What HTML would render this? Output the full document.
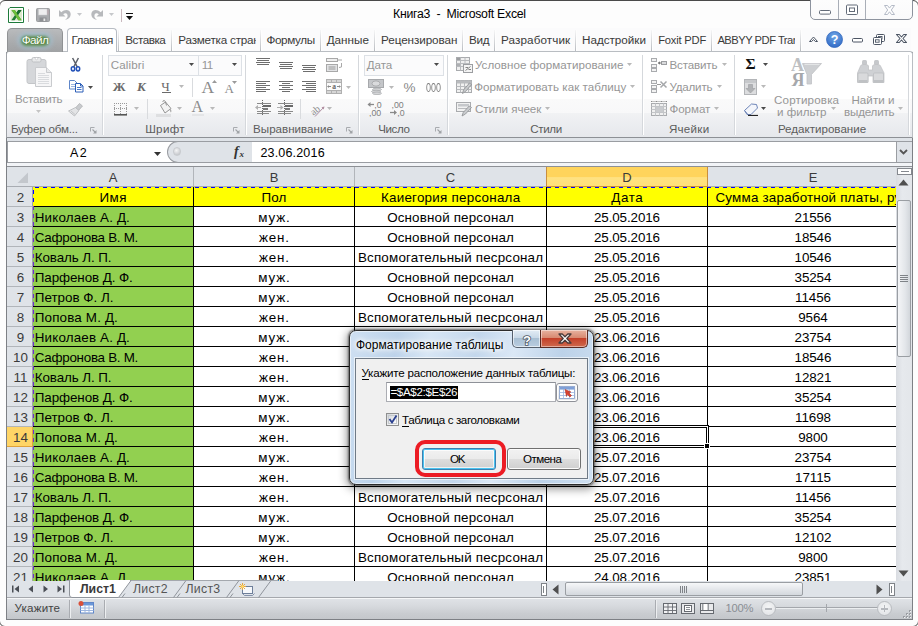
<!DOCTYPE html>
<html><head><meta charset="utf-8">
<style>
*{box-sizing:border-box;margin:0;padding:0}
html,body{width:918px;height:626px;overflow:hidden;background:#fff}
body{font-family:"Liberation Sans",sans-serif;font-size:12px;color:#000;position:relative}
.abs{position:absolute}
#win{position:absolute;left:-1px;top:0;width:920px;height:627px;border:1px solid #4a4a4a;border-radius:6px;background:#fdfdfd;overflow:hidden}
#frame{position:absolute;left:0;top:0;width:918px;height:626px;overflow:hidden}
#client{position:absolute;left:6px;top:52px;width:907px;height:568px;background:#e9ebee;border-left:1px solid #7d8085;border-right:1px solid #7d8085;border-bottom:1px solid #7d8085}
/* title */
#title{position:absolute;left:0;top:6px;width:918px;text-align:center;font-size:12.5px;color:#000;letter-spacing:0px}
/* tabs */
#tabrow{position:absolute;left:7px;top:28px;width:904px;height:24px;background:#fbfbfc}
.tab{position:absolute;top:28px;height:24px;line-height:25px;font-size:12px;color:#3b3b3b;white-space:nowrap;overflow:hidden}
.tsep{position:absolute;top:30px;width:1px;height:21px;background:linear-gradient(#f6f6f7,#b9bcc1)}
.tsep2{position:absolute;top:30px;width:1px;height:21px;background:linear-gradient(#fdfdfd,#ffffff)}
#file{position:absolute;left:7px;top:28px;width:56px;height:24px;background:linear-gradient(#b9bbbd,#a9abad 60%,#a0a2a4);border:1px solid #909294;border-bottom:none;border-radius:5px 5px 0 0}
#home{position:absolute;left:67px;top:28px;width:50px;height:24px;background:#fff;border:1px solid #b7bcc3;border-bottom:none;border-radius:4px 4px 0 0;z-index:3}
/* ribbon */
#ribbon{position:absolute;left:6px;top:51px;width:907px;height:87px;border:1px solid #b9bdc2;border-bottom:1px solid #8d9095;border-left:1px solid #9da0a5;border-radius:3px 3px 0 0;background:linear-gradient(#ffffff 0%,#ffffff 55.3%,#fafafa 55.3%,#f8f8f9 71.8%,#f1f2f4 71.8%,#e6e8ec 100%)}
.gsep{position:absolute;top:55px;width:2px;height:80px;background:linear-gradient(90deg,#d5d8dc 50%,#ffffff 50%)}
.glabel{position:absolute;top:122px;font-size:11.5px;color:#5a5a5a;white-space:nowrap;text-align:center}
.rt{position:absolute;font-size:12px;color:#8c8c8c;white-space:nowrap}
/* formula bar */
#fbar{position:absolute;left:7px;top:138px;width:905px;height:29px;background:#dfe3e8}
#fb2{position:absolute;left:7px;top:163px;width:905px;height:3px;background:#f2f4f7}
#fb3{position:absolute;left:7px;top:166px;width:905px;height:1px;background:#8d9095}
#namebox{position:absolute;left:7px;top:141px;width:175px;height:22px;background:#fff;border:1px solid #9a9da2;border-right:none}
#fxarea{position:absolute;left:252px;top:141px;width:644px;height:22px;background:#fff;border-top:1px solid #9a9da2;border-bottom:1px solid #9a9da2}
.cal{font-family:"Liberation Sans",sans-serif}
/* grid */
#gridbg{position:absolute;left:7px;top:167px;width:889px;height:414px;background:#fff}
#colhdr{position:absolute;left:7px;top:167px;width:889px;height:20px;background:#dfe3e8;border-bottom:1px solid #a8acb2}
.ch{position:absolute;top:167px;height:19px;line-height:21px;text-align:center;font-size:13px;color:#3a3a3a;border-right:1px solid #b1b5ba}
.rh{position:absolute;left:7px;width:26px;height:20px;background:#dfe3e8;border-bottom:1px solid #b1b5ba;border-right:1px solid #9da2a8;text-align:center;line-height:22px;font-size:13.4px;color:#3a3a3a;padding-left:2px}
.rh.sel{background:#ffd566;border-bottom:1px solid #dfa23c;border-right:1px solid #dfa23c;color:#3a3a3a}
.c{position:absolute;height:20px;line-height:21px;font-size:13.4px;text-align:center;white-space:nowrap;overflow:hidden;border-right:1px solid #000;border-bottom:1px solid #000;color:#000;letter-spacing:0.2px}
.c.n{letter-spacing:-0.1px}
/* bottom */
#sheetbar{position:absolute;left:7px;top:581px;width:905px;height:16px;background:#dfe3e8}
#status{position:absolute;left:7px;top:597px;width:905px;height:22px;background:linear-gradient(#e0e3e7 0%,#d6d9dd 40%,#c9ccd0 75%,#c4c7cb 100%);border-top:1px solid #a5a8ad;box-shadow:inset 0 1px 0 #f6f7f8}
#vscroll{position:absolute;left:896px;top:167px;width:16px;height:414px;background:linear-gradient(90deg,#d9dce1,#e6e9ed 40%,#e3e6ea);}
</style></head><body>
<div id="frame">
<div id="win"></div>
<div id="client"></div>


<div id="tabrow"></div>
<div id="ribbon"></div>
<div id="file"></div>
<div id="home"></div>
<div style="position:absolute;left:393.00px;top:6px;font-size:12.3px;line-height:16px;letter-spacing:-0.271px;color:#000;white-space:nowrap;white-space:pre;">Книга3  -  Microsoft Excel</div>
<svg style="position:absolute;left:8px;top:7px;" width="17" height="16" viewBox="0 0 17 16"><path d="M2 0.500H15.500V15.500H0.500V2z" fill="#fff" stroke="#1d7a3a"/>
<rect x="2.500" y="2.500" width="11.500" height="11" fill="#dce8cc"/>
<path d="M3.500 3h3.300l1.700 2.800L10.300 3h3.200L10 8l3.600 5.200h-3.300L8.500 10.200 6.700 13.200H3.400L7 8z" fill="#1f7a34"/>
<path d="M3.500 3h3.300L10 8l3.600 5.200h-3.300L7 8z" fill="#6fbf3a"/><path d="M8.500 5.800L10.300 3h3.200L10 8z" fill="#176b2c"/></svg>
<div style="position:absolute;left:28px;top:9px;width:1px;height:13px;background:#c9b8be"></div>
<svg style="position:absolute;left:36px;top:8px;" width="14" height="14" viewBox="0 0 14 14"><rect x="0.500" y="0.500" width="13" height="13" rx="1" fill="#a9abae" stroke="#9a9c9f"/>
<rect x="2.500" y="1" width="8.500" height="6" fill="#eeeeef" stroke="#c9cbcd" stroke-width=".5"/><rect x="3.500" y="9.500" width="7" height="4" fill="#8e9093"/><rect x="7.500" y="10.500" width="1.800" height="2.500" fill="#e9e9e9"/><path d="M12 1.500v5" stroke="#c5a8ae" stroke-width=".8"/></svg>
<svg style="position:absolute;left:58px;top:8px;" width="14" height="13" viewBox="0 0 14 13"><path d="M1 2v6.500h6.500L5.200 6.200C7 4.800 9 5.200 9.500 7c.5 2-.5 3.500-2.500 5 4.200-.8 6.300-3.800 5.500-7C11.700 1.500 7 .5 3.300 4.300z" fill="#b7b9bc"/></svg>
<svg style="position:absolute;left:77px;top:13px" width="5" height="3" viewBox="0 0 5 3"><path d="M0 0H5L2.5 3Z" fill="#c6c8cb"/></svg>
<svg style="position:absolute;left:90px;top:8px;" width="14" height="13" viewBox="0 0 14 13"><g transform="translate(14,0) scale(-1,1)"><path d="M1 2v6.500h6.500L5.200 6.200C7 4.800 9 5.200 9.500 7c.5 2-.5 3.500-2.500 5 4.200-.8 6.300-3.800 5.500-7C11.700 1.500 7 .5 3.300 4.300z" fill="#b7b9bc"/></g></svg>
<svg style="position:absolute;left:109px;top:13px" width="5" height="3" viewBox="0 0 5 3"><path d="M0 0H5L2.5 3Z" fill="#c6c8cb"/></svg>
<div style="position:absolute;left:121px;top:9px;width:1px;height:13px;background:#c9b8be"></div>
<div style="position:absolute;left:126px;top:13px;width:7px;height:1px;background:#111"></div>
<svg style="position:absolute;left:126px;top:16px" width="7" height="4" viewBox="0 0 7 4"><path d="M0 0H7L3.5 4Z" fill="#111"/></svg>
<div style="position:absolute;left:810px;top:-1px;width:103px;height:21px;border:1px solid #8d939e;border-radius:0 0 5px 5px;background:linear-gradient(#fdfdfd,#fafafb)"></div>
<div style="position:absolute;left:838px;top:0px;width:1px;height:19px;background:#a9aeb7"></div>
<div style="position:absolute;left:865px;top:0px;width:1px;height:19px;background:#a9aeb7"></div>
<svg style="position:absolute;left:818px;top:9px;" width="14" height="7" viewBox="0 0 14 7"><rect x="1.500" y="1.500" width="11" height="3.600" rx="1" fill="#fff" stroke="#636b78" stroke-width="1"/></svg>
<svg style="position:absolute;left:845px;top:4px;" width="14" height="12" viewBox="0 0 14 12"><rect x="1.500" y="1" width="11" height="9.500" rx="1" fill="#fff" stroke="#636b78"/><rect x="4.500" y="4" width="5" height="3.500" fill="#fff" stroke="#636b78"/></svg>
<svg style="position:absolute;left:883px;top:4px;" width="13" height="12" viewBox="0 0 13 12"><path d="M1.500 1.500h3l2 2.600 2-2.600h3L8.300 6l3.200 4.500h-3l-2-2.700-2 2.700h-3L4.700 6z" fill="#fff" stroke="#b4bac6" stroke-width="1"/></svg>
<div style="position:absolute;left:125.20px;top:32px;font-size:11.7px;line-height:15px;letter-spacing:-0.464px;color:#3a3a3a;white-space:nowrap;">Вставка</div>
<div style="position:absolute;left:178.30px;top:32px;font-size:11.7px;line-height:15px;letter-spacing:-0.223px;color:#3a3a3a;white-space:nowrap;width:77.3px;overflow:hidden;">Разметка стран</div>
<div style="position:absolute;left:266.40px;top:32px;font-size:11.7px;line-height:15px;letter-spacing:-0.336px;color:#3a3a3a;white-space:nowrap;">Формулы</div>
<div style="position:absolute;left:326.70px;top:32px;font-size:11.7px;line-height:15px;letter-spacing:0.006px;color:#3a3a3a;white-space:nowrap;">Данные</div>
<div style="position:absolute;left:381.10px;top:32px;font-size:11.7px;line-height:15px;letter-spacing:-0.082px;color:#3a3a3a;white-space:nowrap;">Рецензирован</div>
<div style="position:absolute;left:468.90px;top:32px;font-size:11.7px;line-height:15px;letter-spacing:-0.233px;color:#3a3a3a;white-space:nowrap;">Вид</div>
<div style="position:absolute;left:501.10px;top:32px;font-size:11.7px;line-height:15px;letter-spacing:0.087px;color:#3a3a3a;white-space:nowrap;">Разработчик</div>
<div style="position:absolute;left:582.00px;top:32px;font-size:11.7px;line-height:15px;letter-spacing:-0.022px;color:#3a3a3a;white-space:nowrap;">Надстройки</div>
<div style="position:absolute;left:658.20px;top:33px;font-size:11.2px;line-height:14px;letter-spacing:-0.210px;color:#3a3a3a;white-space:nowrap;">Foxit PDF</div>
<div style="position:absolute;left:717.40px;top:33px;font-size:11.2px;line-height:14px;letter-spacing:-0.499px;color:#3a3a3a;white-space:nowrap;width:77.6px;overflow:hidden;">ABBYY PDF Tran</div>
<div class="tsep" style="left:118px"></div><div class="tsep2" style="left:119px"></div>
<div class="tsep" style="left:171px"></div><div class="tsep2" style="left:172px"></div>
<div class="tsep" style="left:260px"></div><div class="tsep2" style="left:261px"></div>
<div class="tsep" style="left:320px"></div><div class="tsep2" style="left:321px"></div>
<div class="tsep" style="left:374px"></div><div class="tsep2" style="left:375px"></div>
<div class="tsep" style="left:462px"></div><div class="tsep2" style="left:463px"></div>
<div class="tsep" style="left:494px"></div><div class="tsep2" style="left:495px"></div>
<div class="tsep" style="left:575px"></div><div class="tsep2" style="left:576px"></div>
<div class="tsep" style="left:651px"></div><div class="tsep2" style="left:652px"></div>
<div class="tsep" style="left:711px"></div><div class="tsep2" style="left:712px"></div>
<div class="tsep" style="left:800px"></div><div class="tsep2" style="left:801px"></div>
<svg style="position:absolute;left:808px;top:35px;" width="11" height="8" viewBox="0 0 11 8"><path d="M1.500 6.500L5.500 2l4 4.500H7.300L5.500 4.500 3.700 6.500z" fill="#fff" stroke="#4c5564" stroke-width="1" stroke-linejoin="round"/></svg>
<svg style="position:absolute;left:826px;top:31px;" width="17" height="17" viewBox="0 0 17 17"><defs><radialGradient id="hg" cx=".5" cy=".3" r=".8"><stop offset="0" stop-color="#6fa6e6"/><stop offset="1" stop-color="#2a63c2"/></radialGradient></defs>
<circle cx="8.500" cy="8.500" r="8" fill="url(#hg)" stroke="#3268be" stroke-width=".8"/>
<text x="8.500" y="13" font-family="Liberation Sans" font-weight="bold" font-size="12.500" fill="#fff" text-anchor="middle">?</text></svg>
<svg style="position:absolute;left:851px;top:37px;" width="13" height="7" viewBox="0 0 13 7"><rect x="1.500" y="1.500" width="10" height="3.500" rx="1" fill="#fff" stroke="#4c5564"/></svg>
<svg style="position:absolute;left:872px;top:33px;" width="14" height="13" viewBox="0 0 14 13"><rect x="4.500" y="1.500" width="8" height="7" rx="1" fill="#fff" stroke="#4c5564"/><rect x="6.500" y="3.500" width="3.500" height="2.500" fill="#fff" stroke="#4c5564" stroke-width=".9"/><rect x="1.500" y="4.500" width="8" height="7" rx="1" fill="#fff" stroke="#4c5564"/><rect x="3.500" y="6.800" width="3.600" height="2.400" fill="#fff" stroke="#4c5564" stroke-width=".9"/></svg>
<svg style="position:absolute;left:895px;top:33px;" width="13" height="11" viewBox="0 0 13 11"><path d="M1.500 1.500h2.800l2.200 2.500 2.200-2.500h2.800L8 5.500l3.500 4H8.700L6.500 7 4.300 9.500H1.500L5 5.500z" fill="#fff" stroke="#4c5564" stroke-width="1.100" stroke-linejoin="round"/></svg><div style="position:absolute;left:71.40px;top:32px;font-size:11.7px;line-height:15px;letter-spacing:-0.439px;color:#3a3a3a;white-space:nowrap;z-index:4;">Главная</div><div style="position:absolute;left:18px;top:33px;width:34px;height:15px;border-radius:8px;background:#a3bfd0;filter:blur(2.5px);z-index:4"></div><div style="position:absolute;left:21px;top:35.5px;width:28px;height:10px;border-radius:5px;background:#5f8c4c;filter:blur(1.8px);z-index:4"></div><div style="position:absolute;left:21.70px;top:32px;font-size:11.8px;line-height:16px;letter-spacing:-0.637px;color:#fff;white-space:nowrap;z-index:5;text-shadow:0 0 1px #3f7030;">Файл</div>
<div class="gsep" style="left:102px"></div>
<div class="gsep" style="left:245px"></div>
<div class="gsep" style="left:358px"></div>
<div class="gsep" style="left:447px"></div>
<div class="gsep" style="left:642px"></div>
<div class="gsep" style="left:734px"></div>
<div class="gsep" style="left:908px"></div>
<svg style="position:absolute;left:26px;top:56px;" width="27" height="32" viewBox="0 0 27 32"><rect x="1" y="3.500" width="19" height="24" rx="2" fill="#d5d7da" stroke="#c3c5c8"/>
<rect x="6" y="1.500" width="9" height="4.500" rx="1.500" fill="#e8e9ea" stroke="#bfc1c4"/><circle cx="10.500" cy="2.600" r="1.200" fill="#fff" stroke="#bfc1c4" stroke-width=".6"/>
<path d="M9.500 11.500h11l5 5v14h-16z" fill="#f6f6f7" stroke="#c9cbce"/><path d="M20.500 11.500v5h5" fill="#e9eaeb" stroke="#c9cbce"/>
<g stroke="#d9dbde"><path d="M12 19.500h11M12 21.500h11M12 23.500h11M12 25.500h11M12 27.500h11M12 17.500h7"/></g></svg>
<div style="position:absolute;left:14.90px;top:92px;font-size:11.6px;line-height:14px;letter-spacing:-0.210px;color:#969696;white-space:nowrap;">Вставить</div>
<svg style="position:absolute;left:36px;top:110px" width="5" height="3" viewBox="0 0 5 3"><path d="M0 0H5L2.5 3Z" fill="#c4c4c4"/></svg>
<svg style="position:absolute;left:70px;top:57px;" width="11" height="15" viewBox="0 0 11 15"><path d="M2.600 1L7.300 10M8.400 1L3.700 10" stroke="#5b5f67" stroke-width="1.500" fill="none"/>
<ellipse cx="3" cy="11.800" rx="1.700" ry="2.100" fill="none" stroke="#2452b8" stroke-width="1.500"/><ellipse cx="8" cy="11.800" rx="1.700" ry="2.100" fill="none" stroke="#2452b8" stroke-width="1.500"/></svg>
<svg style="position:absolute;left:68px;top:79px;" width="16" height="14" viewBox="0 0 16 14"><path d="M1.500 1.500h5l2.500 2.500v6h-7.500z" fill="#fff" stroke="#5f86c9"/><path d="M3 5.500h4M3 7.500h4" stroke="#9db6df"/>
<path d="M7.500 4.500h5l2.500 2.500v6h-7.500z" fill="#fff" stroke="#2d5fb8"/><path d="M9 8.500h4.500M9 10.500h4.500" stroke="#4a78c8"/><path d="M12.500 4.500v2.500h2.500" fill="none" stroke="#2d5fb8"/></svg>
<svg style="position:absolute;left:88px;top:86px" width="5" height="3" viewBox="0 0 5 3"><path d="M0 0H5L2.5 3Z" fill="#4a4a4a"/></svg>
<svg style="position:absolute;left:67px;top:101px;" width="18" height="16" viewBox="0 0 18 16"><path d="M12.500 2.500l3 2.500-4 4.500-3-2.600z" fill="#c9cbce" stroke="#a9abae" stroke-width=".7"/>
<path d="M8.500 6.500l3.500 3-4.500 5.500-6-5z" fill="#e3e4e6" stroke="#b3b5b8" stroke-width=".8"/><path d="M4 10l4 3.500" stroke="#c3c5c8"/></svg>
<div style="position:absolute;left:10.90px;top:122px;font-size:11.6px;line-height:14px;letter-spacing:-0.180px;color:#5c5c5c;white-space:nowrap;">Буфер обм...</div>
<svg style="position:absolute;left:90px;top:127px;" width="7" height="7" viewBox="0 0 7 7"><path d="M0.500 4.500V0.500H4.500" fill="none" stroke="#a8abaf"/><path d="M2.500 2.500l3 3" fill="none" stroke="#9fa2a6" stroke-width="1.100"/><path d="M6.500 3v3.500H3z" fill="#9fa2a6"/></svg>
<div style="position:absolute;left:108px;top:55px;width:91px;height:21px;border:1px solid #dde1e6;background:#fbfbfc"></div>
<div style="position:absolute;left:198px;top:55px;width:44px;height:21px;border:1px solid #dde1e6;background:#fbfbfc"></div>
<div style="position:absolute;left:110.80px;top:58px;font-size:11.6px;line-height:14px;letter-spacing:0.121px;color:#969696;white-space:nowrap;">Calibri</div>
<svg style="position:absolute;left:189px;top:63px" width="5" height="3" viewBox="0 0 5 3"><path d="M0 0H5L2.5 3Z" fill="#4a4a4a"/></svg>
<div style="position:absolute;left:201.70px;top:58px;font-size:11.6px;line-height:14px;letter-spacing:-0.442px;color:#969696;white-space:nowrap;">11</div>
<svg style="position:absolute;left:232px;top:63px" width="5" height="3" viewBox="0 0 5 3"><path d="M0 0H5L2.5 3Z" fill="#4a4a4a"/></svg>
<div style="position:absolute;left:112.80px;top:78px;font-size:13px;line-height:17px;letter-spacing:0.946px;color:#6a6a6a;white-space:nowrap;font-family:'Liberation Serif',serif;font-weight:bold;">Ж</div>
<div style="position:absolute;left:137.00px;top:78px;font-size:13px;line-height:17px;letter-spacing:2.683px;color:#6a6a6a;white-space:nowrap;font-family:'Liberation Serif',serif;font-weight:bold;font-style:italic;">К</div>
<div style="position:absolute;left:161.20px;top:78px;font-size:13px;line-height:17px;letter-spacing:1.551px;color:#6a6a6a;white-space:nowrap;font-family:'Liberation Serif',serif;">Ч</div>
<div style="position:absolute;left:162px;top:92px;width:9px;height:1px;background:#6a6a6a"></div>
<svg style="position:absolute;left:179px;top:85px" width="5" height="3" viewBox="0 0 5 3"><path d="M0 0H5L2.5 3Z" fill="#b9b9b9"/></svg>
<div style="position:absolute;left:192px;top:78px;width:1px;height:19px;background:#d9dbde"></div>
<div style="position:absolute;left:201.40px;top:76px;font-size:17.5px;line-height:22px;letter-spacing:0.062px;color:#8a8a8a;white-space:nowrap;font-family:'Liberation Serif',serif;">A</div>
<svg style="position:absolute;left:212px;top:80px;" width="5" height="3" viewBox="0 0 5 3"><path d="M0 3L2.500 0 5 3z" fill="#9a9a9a"/></svg>
<div style="position:absolute;left:224.40px;top:80px;font-size:13px;line-height:17px;letter-spacing:0.312px;color:#8a8a8a;white-space:nowrap;font-family:'Liberation Serif',serif;">A</div>
<svg style="position:absolute;left:232px;top:81px" width="5" height="3" viewBox="0 0 5 3"><path d="M0 0H5L2.5 3Z" fill="#9a9a9a"/></svg>
<svg style="position:absolute;left:114px;top:102px;" width="14" height="15" viewBox="0 0 14 15"><g stroke="#9a9a9a" stroke-dasharray="1 1"><path d="M0 1.500h13M0 6.500h13M0.500 1v11M6.500 1v11M12.500 1v11"/></g><rect x="0" y="12" width="13" height="1.600" fill="#555"/></svg>
<svg style="position:absolute;left:134px;top:107px" width="5" height="3" viewBox="0 0 5 3"><path d="M0 0H5L2.5 3Z" fill="#b9b9b9"/></svg>
<div style="position:absolute;left:147px;top:99px;width:1px;height:20px;background:#d9dbde"></div>
<svg style="position:absolute;left:155px;top:100px;" width="18" height="18" viewBox="0 0 18 18"><path d="M5.500 5.500l5-3.500 5.500 6.500-6 4.500z" fill="#f3f3f3" stroke="#8a8a8a" stroke-width=".9"/><path d="M8 2c-.5-2 2-2 2.500 0l1 3.500" fill="none" stroke="#8a8a8a" stroke-width=".9"/>
<path d="M15 8.500c1.500 1 1.800 3 1 4-.8-.5-1.500-2-1-4z" fill="#aaa"/><rect x="1" y="14" width="15" height="3" fill="#dedfe1"/></svg>
<svg style="position:absolute;left:177px;top:107px" width="5" height="3" viewBox="0 0 5 3"><path d="M0 0H5L2.5 3Z" fill="#b9b9b9"/></svg>
<div style="position:absolute;left:191.40px;top:97px;font-size:16px;line-height:19px;letter-spacing:1.145px;color:#8a8a8a;white-space:nowrap;font-family:'Liberation Serif',serif;">A</div>
<div style="position:absolute;left:192px;top:113.5px;width:12px;height:2.5px;background:#e4e5e7"></div>
<svg style="position:absolute;left:210px;top:107px" width="5" height="3" viewBox="0 0 5 3"><path d="M0 0H5L2.5 3Z" fill="#b9b9b9"/></svg>
<div style="position:absolute;left:145.20px;top:122px;font-size:11.6px;line-height:14px;letter-spacing:0.309px;color:#5c5c5c;white-space:nowrap;">Шрифт</div>
<svg style="position:absolute;left:233px;top:127px;" width="7" height="7" viewBox="0 0 7 7"><path d="M0.500 4.500V0.500H4.500" fill="none" stroke="#a8abaf"/><path d="M2.500 2.500l3 3" fill="none" stroke="#9fa2a6" stroke-width="1.100"/><path d="M6.500 3v3.500H3z" fill="#9fa2a6"/></svg>
<svg style="position:absolute;left:256px;top:58px;" width="15" height="8" viewBox="0 0 15 8"><rect x="0" y="0" width="14" height="1" fill="#6e6e6e"/><rect x="1" y="2" width="12" height="1" fill="#6e6e6e"/><rect x="0" y="4" width="14" height="1" fill="#6e6e6e"/><rect x="1" y="6" width="12" height="1" fill="#6e6e6e"/></svg>
<svg style="position:absolute;left:279px;top:62px;" width="15" height="8" viewBox="0 0 15 8"><rect x="0" y="0" width="14" height="1" fill="#6e6e6e"/><rect x="1" y="2" width="12" height="1" fill="#6e6e6e"/><rect x="0" y="4" width="14" height="1" fill="#6e6e6e"/><rect x="1" y="6" width="12" height="1" fill="#6e6e6e"/></svg>
<svg style="position:absolute;left:302px;top:65px;" width="15" height="8" viewBox="0 0 15 8"><rect x="0" y="0" width="14" height="1" fill="#6e6e6e"/><rect x="1" y="2" width="12" height="1" fill="#6e6e6e"/><rect x="0" y="4" width="14" height="1" fill="#6e6e6e"/><rect x="1" y="6" width="12" height="1" fill="#6e6e6e"/></svg>
<svg style="position:absolute;left:326px;top:57px;" width="17" height="16" viewBox="0 0 17 16"><rect x="0.500" y="1.500" width="11" height="3" fill="#efefef" stroke="#a8a8a8"/><path d="M12 3h4" stroke="#a8a8a8"/>
<rect x="0.500" y="7.500" width="11" height="7" fill="#e2e3e5" stroke="#a8a8a8"/><path d="M2.500 10h7M2.500 12h7" stroke="#9a9a9a"/><path d="M15.500 6v4l-2.500.500" fill="none" stroke="#a8a8a8"/></svg>
<svg style="position:absolute;left:256px;top:81px;" width="15" height="12" viewBox="0 0 15 12"><rect x="0" y="0" width="14" height="1" fill="#6e6e6e"/><rect x="0" y="2" width="10" height="1" fill="#6e6e6e"/><rect x="0" y="4" width="14" height="1" fill="#6e6e6e"/><rect x="0" y="6" width="10" height="1" fill="#6e6e6e"/><rect x="0" y="8" width="14" height="1" fill="#6e6e6e"/><rect x="0" y="10" width="10" height="1" fill="#6e6e6e"/></svg>
<svg style="position:absolute;left:279px;top:81px;" width="15" height="12" viewBox="0 0 15 12"><rect x="0" y="0" width="14" height="1" fill="#6e6e6e"/><rect x="3" y="2" width="8" height="1" fill="#6e6e6e"/><rect x="0" y="4" width="14" height="1" fill="#6e6e6e"/><rect x="3" y="6" width="8" height="1" fill="#6e6e6e"/><rect x="0" y="8" width="14" height="1" fill="#6e6e6e"/><rect x="3" y="10" width="8" height="1" fill="#6e6e6e"/></svg>
<svg style="position:absolute;left:302px;top:81px;" width="15" height="12" viewBox="0 0 15 12"><rect x="0" y="0" width="14" height="1" fill="#6e6e6e"/><rect x="4" y="2" width="10" height="1" fill="#6e6e6e"/><rect x="0" y="4" width="14" height="1" fill="#6e6e6e"/><rect x="4" y="6" width="10" height="1" fill="#6e6e6e"/><rect x="0" y="8" width="14" height="1" fill="#6e6e6e"/><rect x="4" y="10" width="10" height="1" fill="#6e6e6e"/></svg>
<svg style="position:absolute;left:326px;top:79px;" width="17" height="15" viewBox="0 0 17 15"><rect x="0.500" y="0.500" width="15" height="14" fill="#d6d6d6" stroke="#b0b0b0"/><path d="M0.500 3.500h15M0.500 11.500h15M5.500 0.500v3M10.500 0.500v3M5.500 11.500v3M10.500 11.500v3" stroke="#b0b0b0"/>
<rect x="1" y="4" width="14" height="7" fill="#fafafa"/><text x="8" y="10" font-family="Liberation Serif" font-weight="bold" font-size="7.500" fill="#666" text-anchor="middle">a</text>
<path d="M1.500 7.500h3.500M11 7.500h3.500" stroke="#888"/><path d="M1.500 7.500l1.500-1.500v3zM14.500 7.500l-1.500-1.500v3z" fill="#888"/></svg>
<svg style="position:absolute;left:346px;top:86px" width="5" height="3" viewBox="0 0 5 3"><path d="M0 0H5L2.5 3Z" fill="#b9b9b9"/></svg>
<svg style="position:absolute;left:255px;top:100px;" width="17" height="17" viewBox="0 0 17 17"><path d="M7.5 0v16" stroke="#6a6a6a" stroke-dasharray="1 1"/>
<rect x="2" y="3" width="14" height="1" fill="#8a8a8a"/><rect x="8" y="5" width="8" height="2" fill="#6a6a6a"/><rect x="8" y="8" width="5" height="2" fill="#7a7a7a"/>
<rect x="2" y="11" width="14" height="1" fill="#8a8a8a"/><rect x="2" y="13" width="12" height="1" fill="#8a8a8a"/>
<path d="M1 7.500h5" stroke="#b0b0b0"/><path d="M0 7.500l3-2.500v5z" fill="#b0b0b0"/></svg>
<svg style="position:absolute;left:277px;top:100px;" width="17" height="17" viewBox="0 0 17 17"><path d="M7.5 0v16" stroke="#6a6a6a" stroke-dasharray="1 1"/>
<rect x="1" y="3" width="15" height="1" fill="#8a8a8a"/><rect x="8" y="5" width="8" height="2" fill="#6a6a6a"/><rect x="8" y="8" width="5" height="2" fill="#7a7a7a"/>
<rect x="1" y="11" width="15" height="1" fill="#8a8a8a"/><rect x="1" y="13" width="13" height="1" fill="#8a8a8a"/>
<path d="M0 7.500h5" stroke="#b0b0b0"/><path d="M6.500 7.500l-3-2.500v5z" fill="#b0b0b0"/></svg>
<div style="position:absolute;left:300px;top:99px;width:1px;height:20px;background:#d9dbde"></div>
<svg style="position:absolute;left:309px;top:101px;" width="18" height="17" viewBox="0 0 18 17"><g transform="rotate(-40 8 8)"><text x="1" y="11" font-family="Liberation Serif" font-size="10" fill="#8a8a8a">ab</text></g><path d="M6 15.500L15 6" stroke="#b08ea0" stroke-width="1"/><path d="M15.500 5.500l-3 .800 2.200 2.200z" fill="#b08ea0"/></svg>
<svg style="position:absolute;left:327px;top:107px" width="5" height="3" viewBox="0 0 5 3"><path d="M0 0H5L2.5 3Z" fill="#b9b9b9"/></svg>
<div style="position:absolute;left:253.10px;top:122px;font-size:11.6px;line-height:14px;letter-spacing:-0.004px;color:#5c5c5c;white-space:nowrap;">Выравнивание</div>
<svg style="position:absolute;left:346px;top:127px;" width="7" height="7" viewBox="0 0 7 7"><path d="M0.500 4.500V0.500H4.500" fill="none" stroke="#a8abaf"/><path d="M2.500 2.500l3 3" fill="none" stroke="#9fa2a6" stroke-width="1.100"/><path d="M6.500 3v3.500H3z" fill="#9fa2a6"/></svg>
<div style="position:absolute;left:364px;top:55px;width:80px;height:21px;border:1px solid #dde1e6;background:#fbfbfc"></div>
<div style="position:absolute;left:366.70px;top:58px;font-size:11.6px;line-height:14px;letter-spacing:-0.029px;color:#969696;white-space:nowrap;">Дата</div>
<svg style="position:absolute;left:434px;top:63px" width="5" height="3" viewBox="0 0 5 3"><path d="M0 0H5L2.5 3Z" fill="#4a4a4a"/></svg>
<svg style="position:absolute;left:368px;top:79px;" width="17" height="16" viewBox="0 0 17 16"><rect x="0.500" y="0.500" width="15" height="8" fill="#c4c6c9" stroke="#a7a9ac"/><ellipse cx="8" cy="4.500" rx="4" ry="2.600" fill="#dadbdd" stroke="#9d9fa2" stroke-width=".7"/>
<ellipse cx="9" cy="10.500" rx="4.500" ry="1.300" fill="#d5d6d8" stroke="#a4a6a9" stroke-width=".7"/><ellipse cx="8" cy="12.500" rx="4.500" ry="1.300" fill="#d5d6d8" stroke="#a4a6a9" stroke-width=".7"/><ellipse cx="9" cy="14.300" rx="4.500" ry="1.300" fill="#d5d6d8" stroke="#a4a6a9" stroke-width=".7"/></svg>
<svg style="position:absolute;left:389px;top:86px" width="5" height="3" viewBox="0 0 5 3"><path d="M0 0H5L2.5 3Z" fill="#b9b9b9"/></svg>
<div style="position:absolute;left:403.40px;top:79px;font-size:13.5px;line-height:17px;letter-spacing:0.696px;color:#8a8a8a;white-space:nowrap;">%</div>
<div style="position:absolute;left:425.5px;top:81px;font-size:12.5px;line-height:14px;color:#7d7d7d;transform:scaleX(0.72);transform-origin:0 0;white-space:nowrap">000</div>
<svg style="position:absolute;left:367px;top:100px;" width="18" height="17" viewBox="0 0 18 17"><path d="M1.500 4.500h5.500" stroke="#8a8a8a" stroke-width="1.300"/><path d="M0.500 4.500l3-2.500v5z" fill="#8a8a8a"/>
<text x="7.300" y="7.800" font-family="Liberation Sans" font-size="8.800" fill="#7d7d7d">,0</text><text x="2" y="16" font-family="Liberation Sans" font-size="8.800" fill="#7d7d7d">,00</text></svg>
<svg style="position:absolute;left:389px;top:100px;" width="18" height="17" viewBox="0 0 18 17"><text x="2.500" y="7.800" font-family="Liberation Sans" font-size="8.800" fill="#7d7d7d">,00</text><path d="M1 12.500h5.500" stroke="#8a8a8a" stroke-width="1.300"/><path d="M8 12.500l-3-2.500v5z" fill="#8a8a8a"/>
<text x="8.300" y="16" font-family="Liberation Sans" font-size="8.800" fill="#7d7d7d">,0</text></svg>
<div style="position:absolute;left:378.20px;top:122px;font-size:11.6px;line-height:14px;letter-spacing:-0.415px;color:#5c5c5c;white-space:nowrap;">Число</div>
<svg style="position:absolute;left:435px;top:127px;" width="7" height="7" viewBox="0 0 7 7"><path d="M0.500 4.500V0.500H4.500" fill="none" stroke="#a8abaf"/><path d="M2.500 2.500l3 3" fill="none" stroke="#9fa2a6" stroke-width="1.100"/><path d="M6.500 3v3.500H3z" fill="#9fa2a6"/></svg>
<svg style="position:absolute;left:456px;top:57px;" width="17" height="16" viewBox="0 0 17 16"><rect x="0.500" y="0.500" width="13" height="13" fill="#efefef" stroke="#a9abae"/><path d="M0.500 3.500h13M0.500 6.500h13M0.500 9.500h13M4.500 0.500v13M9 0.500v13" stroke="#b9bbbe"/>
<rect x="1" y="1" width="3" height="2" fill="#9c9ea1"/><rect x="1" y="7" width="3" height="2" fill="#aeb0b3"/><rect x="7.500" y="7.500" width="9" height="8" fill="#f4f4f4" stroke="#9c9ea1"/><path d="M9.500 10.500h2.500M12.500 12.500h2.500M9.500 13.500l5-4" stroke="#777" stroke-width=".9"/></svg>
<svg style="position:absolute;left:456px;top:79px;" width="17" height="16" viewBox="0 0 17 16"><rect x="0.500" y="1.500" width="15" height="12" fill="#f1f1f1" stroke="#a9abae"/><rect x="0.500" y="1.500" width="15" height="3" fill="#b9bbbe"/><path d="M0.500 7.500h15M0.500 10.500h15M4.500 1.500v12M8.500 1.500v12M12.500 1.500v12" stroke="#b9bbbe"/>
<path d="M15.500 5.500l-6 7-3 2 1-3.500 6-7z" fill="#c9cbce" stroke="#8e9093" stroke-width=".8"/></svg>
<svg style="position:absolute;left:456px;top:101px;" width="17" height="16" viewBox="0 0 17 16"><rect x="0.500" y="1.500" width="14" height="9" fill="#f1f1f1" stroke="#a9abae"/><rect x="2" y="3" width="11" height="2.500" fill="#c6c8cb"/><path d="M2 7.500h11" stroke="#b9bbbe"/>
<path d="M15.500 6.500l-6 6.500-3.500 2 1.200-3.500 6-6.500z" fill="#c9cbce" stroke="#8e9093" stroke-width=".8"/></svg>
<div style="position:absolute;left:474.90px;top:58px;font-size:11.6px;line-height:14px;letter-spacing:0.051px;color:#969696;white-space:nowrap;">Условное форматирование</div>
<svg style="position:absolute;left:627px;top:63px" width="5" height="3" viewBox="0 0 5 3"><path d="M0 0H5L2.5 3Z" fill="#b9b9b9"/></svg>
<div style="position:absolute;left:474.20px;top:80px;font-size:11.6px;line-height:14px;letter-spacing:0.053px;color:#969696;white-space:nowrap;">Форматировать как таблицу</div>
<svg style="position:absolute;left:630px;top:85px" width="5" height="3" viewBox="0 0 5 3"><path d="M0 0H5L2.5 3Z" fill="#b9b9b9"/></svg>
<div style="position:absolute;left:474.90px;top:102px;font-size:11.6px;line-height:14px;letter-spacing:-0.054px;color:#969696;white-space:nowrap;">Стили ячеек</div>
<svg style="position:absolute;left:545px;top:107px" width="5" height="3" viewBox="0 0 5 3"><path d="M0 0H5L2.5 3Z" fill="#b9b9b9"/></svg>
<div style="position:absolute;left:530.20px;top:122px;font-size:11.6px;line-height:14px;letter-spacing:-0.330px;color:#5c5c5c;white-space:nowrap;">Стили</div>
<svg style="position:absolute;left:651px;top:57px;" width="17" height="16" viewBox="0 0 17 16"><rect x="0.500" y="1.500" width="5" height="3" fill="#f3f3f3" stroke="#a9abae"/><rect x="0.500" y="7.500" width="5" height="3" fill="#f3f3f3" stroke="#a9abae"/><rect x="0.500" y="11.500" width="5" height="3" fill="#f3f3f3" stroke="#a9abae"/>
<rect x="10.500" y="4.500" width="5" height="3" fill="#d9dadc" stroke="#9c9ea1"/><path d="M7 6h3.500" stroke="#777"/><path d="M7 6l2-1.800v3.600z" fill="#777"/></svg>
<div style="position:absolute;left:669.40px;top:58px;font-size:11.6px;line-height:14px;letter-spacing:-0.139px;color:#969696;white-space:nowrap;">Вставить</div>
<svg style="position:absolute;left:722px;top:63px" width="5" height="3" viewBox="0 0 5 3"><path d="M0 0H5L2.5 3Z" fill="#b9b9b9"/></svg>
<svg style="position:absolute;left:651px;top:79px;" width="17" height="15" viewBox="0 0 17 15"><rect x="0.500" y="1.500" width="5" height="3" fill="#f3f3f3" stroke="#a9abae"/><rect x="0.500" y="6.500" width="5" height="3" fill="#f3f3f3" stroke="#a9abae"/><rect x="0.500" y="10.500" width="5" height="3" fill="#f3f3f3" stroke="#a9abae"/>
<path d="M6 5.500h4" stroke="#999"/><path d="M9.500 2.500l6 6M15.500 2.500l-6 6" stroke="#a5a7aa" stroke-width="1.500"/></svg>
<div style="position:absolute;left:669.40px;top:80px;font-size:11.6px;line-height:14px;letter-spacing:-0.181px;color:#969696;white-space:nowrap;">Удалить</div>
<svg style="position:absolute;left:717px;top:85px" width="5" height="3" viewBox="0 0 5 3"><path d="M0 0H5L2.5 3Z" fill="#b9b9b9"/></svg>
<svg style="position:absolute;left:651px;top:100px;" width="17" height="17" viewBox="0 0 17 17"><path d="M0.500 2v-1.500M5.500 2v-1.500M10.500 2v-1.500M15.500 2v-1.500M0.500 1.500h15" stroke="#8a8a8a" stroke-dasharray="1 1"/>
<rect x="0.500" y="3.500" width="15" height="12" fill="#f0f0f0" stroke="#a9abae"/><path d="M0.500 6.500h15M0.500 9.500h15M0.500 12.500h15M4.500 3.500v12M8.500 3.500v12M12.500 3.500v12" stroke="#c3c5c8"/><rect x="5" y="7" width="7" height="5" fill="#c9cbce"/></svg>
<div style="position:absolute;left:669.40px;top:102px;font-size:11.6px;line-height:14px;letter-spacing:-0.041px;color:#969696;white-space:nowrap;">Формат</div>
<svg style="position:absolute;left:714px;top:107px" width="5" height="3" viewBox="0 0 5 3"><path d="M0 0H5L2.5 3Z" fill="#b9b9b9"/></svg>
<div style="position:absolute;left:668.90px;top:122px;font-size:11.6px;line-height:14px;letter-spacing:0.279px;color:#5c5c5c;white-space:nowrap;">Ячейки</div>
<div style="position:absolute;left:745.40px;top:54px;font-size:15.5px;line-height:19px;letter-spacing:0.666px;color:#111;white-space:nowrap;font-family:'Liberation Serif',serif;font-weight:bold;">Σ</div>
<svg style="position:absolute;left:763px;top:63px" width="5" height="3" viewBox="0 0 5 3"><path d="M0 0H5L2.5 3Z" fill="#4a4a4a"/></svg>
<svg style="position:absolute;left:744px;top:79px;" width="14" height="16" viewBox="0 0 14 16"><rect x="0.500" y="0.500" width="12" height="15" fill="#dcdddf" stroke="#b3b5b8"/><rect x="1" y="1" width="11" height="3" fill="#c6c8cb"/><path d="M4.500 5.500h4v4h2.500l-4.500 4.500-4.500-4.500h2.500z" fill="#b0b2b5" stroke="#9c9ea1" stroke-width=".6"/></svg>
<svg style="position:absolute;left:761px;top:85px" width="5" height="3" viewBox="0 0 5 3"><path d="M0 0H5L2.5 3Z" fill="#b9b9b9"/></svg>
<svg style="position:absolute;left:743px;top:102px;" width="16" height="14" viewBox="0 0 16 14"><path d="M1.500 8.500l7-6.500 5 .5 1 3.500-6.500 6.500h-4z" fill="#f4f6fb" stroke="#5f78b0" stroke-width=".9" stroke-linejoin="round"/><path d="M1.500 8.500l3.500 4" stroke="#5f78b0" stroke-width=".8"/><path d="M5 13.500h10" stroke="#222" stroke-width="1.200"/></svg>
<svg style="position:absolute;left:761px;top:107px" width="5" height="3" viewBox="0 0 5 3"><path d="M0 0H5L2.5 3Z" fill="#4a4a4a"/></svg>
<svg style="position:absolute;left:791px;top:57px;" width="31" height="31" viewBox="0 0 31 31"><text x="0" y="13.500" font-family="Liberation Serif" font-weight="bold" font-size="18" fill="#bdbfc2">А</text><text x="0.500" y="29" font-family="Liberation Serif" font-weight="bold" font-size="18" fill="#a6a8ab">Я</text>
<path d="M11.500 6.500h19l-10 11v9.500h-4.500v-9.500z" fill="#cdcfd2" stroke="#c0c2c5" stroke-width=".8"/><path d="M13.500 7.300h15" stroke="#e9eaeb"/></svg>
<div style="position:absolute;left:774.00px;top:93px;font-size:11.6px;line-height:14px;letter-spacing:0.160px;color:#969696;white-space:nowrap;">Сортировка</div>
<div style="position:absolute;left:776.90px;top:105px;font-size:11.6px;line-height:14px;letter-spacing:0.043px;color:#969696;white-space:nowrap;">и фильтр</div>
<svg style="position:absolute;left:831px;top:107px" width="5" height="3" viewBox="0 0 5 3"><path d="M0 0H5L2.5 3Z" fill="#b9b9b9"/></svg>
<svg style="position:absolute;left:857px;top:59px;" width="29" height="26" viewBox="0 0 29 26"><rect x="5" y="1" width="5" height="5" rx="1.500" fill="#c6c8cb"/><rect x="17" y="1" width="5" height="5" rx="1.500" fill="#c6c8cb"/>
<path d="M3.500 7c0-2 8-2 8 0v4h4V7c0-2 8-2 8 0l3.500 7v9.500h-11V17h-5v6.500H.5V14z" fill="#cfd1d4" stroke="#bdbfc2" stroke-width=".7"/>
<rect x="1" y="14" width="10" height="9.500" rx="1" fill="#d9dadc" stroke="#b9bbbe" stroke-width=".7"/><rect x="16.500" y="14" width="10" height="9.500" rx="1" fill="#d9dadc" stroke="#b9bbbe" stroke-width=".7"/><rect x="1.500" y="21" width="9" height="2.500" fill="#bfc1c4"/><rect x="17" y="21" width="9" height="2.500" fill="#bfc1c4"/></svg>
<div style="position:absolute;left:851.40px;top:93px;font-size:11.6px;line-height:14px;letter-spacing:0.066px;color:#969696;white-space:nowrap;">Найти и</div>
<div style="position:absolute;left:844.10px;top:105px;font-size:11.6px;line-height:14px;letter-spacing:-0.206px;color:#969696;white-space:nowrap;">выделить</div>
<svg style="position:absolute;left:898px;top:107px" width="5" height="3" viewBox="0 0 5 3"><path d="M0 0H5L2.5 3Z" fill="#b9b9b9"/></svg>
<div style="position:absolute;left:777.90px;top:122px;font-size:11.6px;line-height:14px;letter-spacing:-0.005px;color:#5c5c5c;white-space:nowrap;">Редактирование</div>

<div id="fbar"></div><div id="fb2"></div><div id="fb3"></div>
<div id="namebox"></div>
<div id="fxarea"></div>
<div style="position:absolute;left:69.90px;top:145px;font-size:12.5px;line-height:16px;letter-spacing:1.411px;color:#000;white-space:nowrap;">A2</div>
<svg style="position:absolute;left:154px;top:152px" width="7" height="4" viewBox="0 0 7 4"><path d="M0 0H7L3.5 4Z" fill="#333"/></svg>
<div style="position:absolute;left:167px;top:141px;width:85px;height:22px;background:#dfe3e8;border:1px solid #9a9da2;border-right:none;border-radius:11px 0 0 11px"></div>
<div style="position:absolute;left:173px;top:147px;width:8px;height:9px;border-radius:4px;background:radial-gradient(circle at 40% 35%,#f4f5f6,#b9bcc1);border:1px solid #c9ccd0"></div>
<div style="position:absolute;left:234.00px;top:143px;font-size:14px;line-height:17px;letter-spacing:0.338px;color:#333;white-space:nowrap;font-family:'Liberation Serif',serif;font-weight:bold;font-style:italic;">f</div>
<div style="position:absolute;left:239.50px;top:148px;font-size:9px;line-height:12px;letter-spacing:0.500px;color:#333;white-space:nowrap;font-family:'Liberation Serif',serif;font-weight:bold;font-style:italic;">x</div>
<div style="position:absolute;left:260.40px;top:145px;font-size:12.5px;line-height:16px;letter-spacing:0.182px;color:#000;white-space:nowrap;">23.06.2016</div>
<div style="position:absolute;left:896px;top:141px;width:16px;height:22px;background:#dfe3e8;border:1px solid #9a9da2;border-right:none"></div>
<svg style="position:absolute;left:899px;top:149px;" width="9" height="7" viewBox="0 0 9 7"><path d="M1 1l3.500 3.500L8 1" fill="none" stroke="#555" stroke-width="1.800"/></svg>

<div id="gridbg"></div>
<div id="colhdr"></div>
<div class="ch" style="left:33px;width:161px">A</div>
<div class="ch" style="left:194px;width:161px">B</div>
<div class="ch" style="left:355px;width:191px;border-right:none">C</div>
<div class="ch" style="left:546px;width:162px;height:20px;background:linear-gradient(#ffd45c 0%,#ffd45c 50%,#ffe283 56%,#ffe07a 100%);border-left:1px solid #c98e3e;border-right:1px solid #c98e3e;border-bottom:1px solid #c98e3e">D</div>
<div class="ch" style="left:708px;width:188px;border-right:none;padding-left:22px">E</div>
<div class="rh" style="top:187px">2</div>
<div class="c" style="top:187px;left:33px;width:161px;background:#ffff00;letter-spacing:0.400px;"><span style="margin-right:-0.400px">Имя</span></div>
<div class="c" style="top:187px;left:194px;width:161px;background:#ffff00;letter-spacing:0.096px;"><span style="margin-right:-0.096px">Пол</span></div>
<div class="c" style="top:187px;left:355px;width:192px;background:#ffff00;letter-spacing:0.253px;"><span style="margin-right:-0.253px">Каиегория персонала</span></div>
<div class="c" style="top:187px;left:547px;width:161px;background:#ffff00;letter-spacing:0.542px;"><span style="margin-right:-0.542px">Дата</span></div>
<div class="c" style="top:187px;left:708px;width:188px;background:#ffff00;letter-spacing:-0.100px;text-align:left;padding-left:7.5px;border-right:none;letter-spacing:0.2px;"><span style="margin-right:0.100px">Сумма заработной платы, руб.</span></div>
<div class="rh" style="top:207px">3</div>
<div class="c" style="top:207px;left:33px;width:161px;background:#92d050;letter-spacing:0.155px;text-align:left;padding-left:1.8px;"><span style="margin-right:-0.155px">Николаев А. Д.</span></div>
<div class="c" style="top:207px;left:194px;width:161px;background:#ffffff;letter-spacing:0.800px;"><span style="margin-right:-0.800px">муж.</span></div>
<div class="c" style="top:207px;left:355px;width:192px;background:#ffffff;letter-spacing:0.157px;"><span style="margin-right:-0.157px">Основной персонал</span></div>
<div class="c" style="top:207px;left:547px;width:161px;background:#ffffff;letter-spacing:-0.100px;"><span style="margin-right:0.100px">25.05.2016</span></div>
<div class="c" style="top:207px;left:708px;width:188px;background:#ffffff;letter-spacing:-0.100px;border-right:none;padding-left:22px;"><span style="margin-right:0.100px">21556</span></div>
<div class="rh" style="top:227px">4</div>
<div class="c" style="top:227px;left:33px;width:161px;background:#92d050;letter-spacing:-0.277px;text-align:left;padding-left:1.8px;"><span style="margin-right:0.277px">Сафронова В. М.</span></div>
<div class="c" style="top:227px;left:194px;width:161px;background:#ffffff;letter-spacing:0.853px;"><span style="margin-right:-0.853px">жен.</span></div>
<div class="c" style="top:227px;left:355px;width:192px;background:#ffffff;letter-spacing:0.157px;"><span style="margin-right:-0.157px">Основной персонал</span></div>
<div class="c" style="top:227px;left:547px;width:161px;background:#ffffff;letter-spacing:-0.100px;"><span style="margin-right:0.100px">25.05.2016</span></div>
<div class="c" style="top:227px;left:708px;width:188px;background:#ffffff;letter-spacing:-0.100px;border-right:none;padding-left:22px;"><span style="margin-right:0.100px">18546</span></div>
<div class="rh" style="top:247px">5</div>
<div class="c" style="top:247px;left:33px;width:161px;background:#92d050;letter-spacing:-0.091px;text-align:left;padding-left:1.8px;"><span style="margin-right:0.091px">Коваль Л. П.</span></div>
<div class="c" style="top:247px;left:194px;width:161px;background:#ffffff;letter-spacing:0.853px;"><span style="margin-right:-0.853px">жен.</span></div>
<div class="c" style="top:247px;left:355px;width:192px;background:#ffffff;letter-spacing:0.194px;"><span style="margin-right:-0.194px">Вспомогательный песрсонал</span></div>
<div class="c" style="top:247px;left:547px;width:161px;background:#ffffff;letter-spacing:-0.100px;"><span style="margin-right:0.100px">25.05.2016</span></div>
<div class="c" style="top:247px;left:708px;width:188px;background:#ffffff;letter-spacing:-0.100px;border-right:none;padding-left:22px;"><span style="margin-right:0.100px">10546</span></div>
<div class="rh" style="top:267px">6</div>
<div class="c" style="top:267px;left:33px;width:161px;background:#92d050;letter-spacing:-0.088px;text-align:left;padding-left:1.8px;"><span style="margin-right:0.088px">Парфенов Д. Ф.</span></div>
<div class="c" style="top:267px;left:194px;width:161px;background:#ffffff;letter-spacing:0.800px;"><span style="margin-right:-0.800px">муж.</span></div>
<div class="c" style="top:267px;left:355px;width:192px;background:#ffffff;letter-spacing:0.157px;"><span style="margin-right:-0.157px">Основной персонал</span></div>
<div class="c" style="top:267px;left:547px;width:161px;background:#ffffff;letter-spacing:-0.100px;"><span style="margin-right:0.100px">25.05.2016</span></div>
<div class="c" style="top:267px;left:708px;width:188px;background:#ffffff;letter-spacing:-0.100px;border-right:none;padding-left:22px;"><span style="margin-right:0.100px">35254</span></div>
<div class="rh" style="top:287px">7</div>
<div class="c" style="top:287px;left:33px;width:161px;background:#92d050;letter-spacing:0.012px;text-align:left;padding-left:1.8px;"><span style="margin-right:-0.012px">Петров Ф. Л.</span></div>
<div class="c" style="top:287px;left:194px;width:161px;background:#ffffff;letter-spacing:0.800px;"><span style="margin-right:-0.800px">муж.</span></div>
<div class="c" style="top:287px;left:355px;width:192px;background:#ffffff;letter-spacing:0.157px;"><span style="margin-right:-0.157px">Основной персонал</span></div>
<div class="c" style="top:287px;left:547px;width:161px;background:#ffffff;letter-spacing:-0.100px;"><span style="margin-right:0.100px">25.05.2016</span></div>
<div class="c" style="top:287px;left:708px;width:188px;background:#ffffff;letter-spacing:-0.100px;border-right:none;padding-left:22px;"><span style="margin-right:0.100px">11456</span></div>
<div class="rh" style="top:307px">8</div>
<div class="c" style="top:307px;left:33px;width:161px;background:#92d050;letter-spacing:0.160px;text-align:left;padding-left:1.8px;"><span style="margin-right:-0.160px">Попова М. Д.</span></div>
<div class="c" style="top:307px;left:194px;width:161px;background:#ffffff;letter-spacing:0.853px;"><span style="margin-right:-0.853px">жен.</span></div>
<div class="c" style="top:307px;left:355px;width:192px;background:#ffffff;letter-spacing:0.194px;"><span style="margin-right:-0.194px">Вспомогательный песрсонал</span></div>
<div class="c" style="top:307px;left:547px;width:161px;background:#ffffff;letter-spacing:-0.100px;"><span style="margin-right:0.100px">25.05.2016</span></div>
<div class="c" style="top:307px;left:708px;width:188px;background:#ffffff;letter-spacing:-0.100px;border-right:none;padding-left:22px;"><span style="margin-right:0.100px">9564</span></div>
<div class="rh" style="top:327px">9</div>
<div class="c" style="top:327px;left:33px;width:161px;background:#92d050;letter-spacing:0.155px;text-align:left;padding-left:1.8px;"><span style="margin-right:-0.155px">Николаев А. Д.</span></div>
<div class="c" style="top:327px;left:194px;width:161px;background:#ffffff;letter-spacing:0.800px;"><span style="margin-right:-0.800px">муж.</span></div>
<div class="c" style="top:327px;left:355px;width:192px;background:#ffffff;letter-spacing:0.157px;"><span style="margin-right:-0.157px">Основной персонал</span></div>
<div class="c" style="top:327px;left:547px;width:161px;background:#ffffff;letter-spacing:-0.100px;"><span style="margin-right:0.100px">23.06.2016</span></div>
<div class="c" style="top:327px;left:708px;width:188px;background:#ffffff;letter-spacing:-0.100px;border-right:none;padding-left:22px;"><span style="margin-right:0.100px">23754</span></div>
<div class="rh" style="top:347px">10</div>
<div class="c" style="top:347px;left:33px;width:161px;background:#92d050;letter-spacing:-0.277px;text-align:left;padding-left:1.8px;"><span style="margin-right:0.277px">Сафронова В. М.</span></div>
<div class="c" style="top:347px;left:194px;width:161px;background:#ffffff;letter-spacing:0.853px;"><span style="margin-right:-0.853px">жен.</span></div>
<div class="c" style="top:347px;left:355px;width:192px;background:#ffffff;letter-spacing:0.157px;"><span style="margin-right:-0.157px">Основной персонал</span></div>
<div class="c" style="top:347px;left:547px;width:161px;background:#ffffff;letter-spacing:-0.100px;"><span style="margin-right:0.100px">23.06.2016</span></div>
<div class="c" style="top:347px;left:708px;width:188px;background:#ffffff;letter-spacing:-0.100px;border-right:none;padding-left:22px;"><span style="margin-right:0.100px">18546</span></div>
<div class="rh" style="top:367px">11</div>
<div class="c" style="top:367px;left:33px;width:161px;background:#92d050;letter-spacing:-0.091px;text-align:left;padding-left:1.8px;"><span style="margin-right:0.091px">Коваль Л. П.</span></div>
<div class="c" style="top:367px;left:194px;width:161px;background:#ffffff;letter-spacing:0.853px;"><span style="margin-right:-0.853px">жен.</span></div>
<div class="c" style="top:367px;left:355px;width:192px;background:#ffffff;letter-spacing:0.194px;"><span style="margin-right:-0.194px">Вспомогательный песрсонал</span></div>
<div class="c" style="top:367px;left:547px;width:161px;background:#ffffff;letter-spacing:-0.100px;"><span style="margin-right:0.100px">23.06.2016</span></div>
<div class="c" style="top:367px;left:708px;width:188px;background:#ffffff;letter-spacing:-0.100px;border-right:none;padding-left:22px;"><span style="margin-right:0.100px">12821</span></div>
<div class="rh" style="top:387px">12</div>
<div class="c" style="top:387px;left:33px;width:161px;background:#92d050;letter-spacing:-0.088px;text-align:left;padding-left:1.8px;"><span style="margin-right:0.088px">Парфенов Д. Ф.</span></div>
<div class="c" style="top:387px;left:194px;width:161px;background:#ffffff;letter-spacing:0.800px;"><span style="margin-right:-0.800px">муж.</span></div>
<div class="c" style="top:387px;left:355px;width:192px;background:#ffffff;letter-spacing:0.157px;"><span style="margin-right:-0.157px">Основной персонал</span></div>
<div class="c" style="top:387px;left:547px;width:161px;background:#ffffff;letter-spacing:-0.100px;"><span style="margin-right:0.100px">23.06.2016</span></div>
<div class="c" style="top:387px;left:708px;width:188px;background:#ffffff;letter-spacing:-0.100px;border-right:none;padding-left:22px;"><span style="margin-right:0.100px">35254</span></div>
<div class="rh" style="top:407px">13</div>
<div class="c" style="top:407px;left:33px;width:161px;background:#92d050;letter-spacing:0.012px;text-align:left;padding-left:1.8px;"><span style="margin-right:-0.012px">Петров Ф. Л.</span></div>
<div class="c" style="top:407px;left:194px;width:161px;background:#ffffff;letter-spacing:0.800px;"><span style="margin-right:-0.800px">муж.</span></div>
<div class="c" style="top:407px;left:355px;width:192px;background:#ffffff;letter-spacing:0.157px;"><span style="margin-right:-0.157px">Основной персонал</span></div>
<div class="c" style="top:407px;left:547px;width:161px;background:#ffffff;letter-spacing:-0.100px;"><span style="margin-right:0.100px">23.06.2016</span></div>
<div class="c" style="top:407px;left:708px;width:188px;background:#ffffff;letter-spacing:-0.100px;border-right:none;padding-left:22px;"><span style="margin-right:0.100px">11698</span></div>
<div class="rh sel" style="top:427px">14</div>
<div class="c" style="top:427px;left:33px;width:161px;background:#92d050;letter-spacing:0.160px;text-align:left;padding-left:1.8px;"><span style="margin-right:-0.160px">Попова М. Д.</span></div>
<div class="c" style="top:427px;left:194px;width:161px;background:#ffffff;letter-spacing:0.853px;"><span style="margin-right:-0.853px">жен.</span></div>
<div class="c" style="top:427px;left:355px;width:192px;background:#ffffff;letter-spacing:0.194px;"><span style="margin-right:-0.194px">Вспомогательный песрсонал</span></div>
<div class="c" style="top:427px;left:547px;width:161px;background:#ffffff;letter-spacing:-0.100px;"><span style="margin-right:0.100px">23.06.2016</span></div>
<div class="c" style="top:427px;left:708px;width:188px;background:#ffffff;letter-spacing:-0.100px;border-right:none;padding-left:22px;"><span style="margin-right:0.100px">9800</span></div>
<div class="rh" style="top:447px">15</div>
<div class="c" style="top:447px;left:33px;width:161px;background:#92d050;letter-spacing:0.155px;text-align:left;padding-left:1.8px;"><span style="margin-right:-0.155px">Николаев А. Д.</span></div>
<div class="c" style="top:447px;left:194px;width:161px;background:#ffffff;letter-spacing:0.800px;"><span style="margin-right:-0.800px">муж.</span></div>
<div class="c" style="top:447px;left:355px;width:192px;background:#ffffff;letter-spacing:0.157px;"><span style="margin-right:-0.157px">Основной персонал</span></div>
<div class="c" style="top:447px;left:547px;width:161px;background:#ffffff;letter-spacing:-0.100px;"><span style="margin-right:0.100px">25.07.2016</span></div>
<div class="c" style="top:447px;left:708px;width:188px;background:#ffffff;letter-spacing:-0.100px;border-right:none;padding-left:22px;"><span style="margin-right:0.100px">23754</span></div>
<div class="rh" style="top:467px">16</div>
<div class="c" style="top:467px;left:33px;width:161px;background:#92d050;letter-spacing:-0.277px;text-align:left;padding-left:1.8px;"><span style="margin-right:0.277px">Сафронова В. М.</span></div>
<div class="c" style="top:467px;left:194px;width:161px;background:#ffffff;letter-spacing:0.853px;"><span style="margin-right:-0.853px">жен.</span></div>
<div class="c" style="top:467px;left:355px;width:192px;background:#ffffff;letter-spacing:0.157px;"><span style="margin-right:-0.157px">Основной персонал</span></div>
<div class="c" style="top:467px;left:547px;width:161px;background:#ffffff;letter-spacing:-0.100px;"><span style="margin-right:0.100px">25.07.2016</span></div>
<div class="c" style="top:467px;left:708px;width:188px;background:#ffffff;letter-spacing:-0.100px;border-right:none;padding-left:22px;"><span style="margin-right:0.100px">17115</span></div>
<div class="rh" style="top:487px">17</div>
<div class="c" style="top:487px;left:33px;width:161px;background:#92d050;letter-spacing:-0.091px;text-align:left;padding-left:1.8px;"><span style="margin-right:0.091px">Коваль Л. П.</span></div>
<div class="c" style="top:487px;left:194px;width:161px;background:#ffffff;letter-spacing:0.853px;"><span style="margin-right:-0.853px">жен.</span></div>
<div class="c" style="top:487px;left:355px;width:192px;background:#ffffff;letter-spacing:0.194px;"><span style="margin-right:-0.194px">Вспомогательный песрсонал</span></div>
<div class="c" style="top:487px;left:547px;width:161px;background:#ffffff;letter-spacing:-0.100px;"><span style="margin-right:0.100px">25.07.2016</span></div>
<div class="c" style="top:487px;left:708px;width:188px;background:#ffffff;letter-spacing:-0.100px;border-right:none;padding-left:22px;"><span style="margin-right:0.100px">11456</span></div>
<div class="rh" style="top:507px">18</div>
<div class="c" style="top:507px;left:33px;width:161px;background:#92d050;letter-spacing:-0.088px;text-align:left;padding-left:1.8px;"><span style="margin-right:0.088px">Парфенов Д. Ф.</span></div>
<div class="c" style="top:507px;left:194px;width:161px;background:#ffffff;letter-spacing:0.800px;"><span style="margin-right:-0.800px">муж.</span></div>
<div class="c" style="top:507px;left:355px;width:192px;background:#ffffff;letter-spacing:0.157px;"><span style="margin-right:-0.157px">Основной персонал</span></div>
<div class="c" style="top:507px;left:547px;width:161px;background:#ffffff;letter-spacing:-0.100px;"><span style="margin-right:0.100px">25.07.2016</span></div>
<div class="c" style="top:507px;left:708px;width:188px;background:#ffffff;letter-spacing:-0.100px;border-right:none;padding-left:22px;"><span style="margin-right:0.100px">35254</span></div>
<div class="rh" style="top:527px">19</div>
<div class="c" style="top:527px;left:33px;width:161px;background:#92d050;letter-spacing:0.012px;text-align:left;padding-left:1.8px;"><span style="margin-right:-0.012px">Петров Ф. Л.</span></div>
<div class="c" style="top:527px;left:194px;width:161px;background:#ffffff;letter-spacing:0.800px;"><span style="margin-right:-0.800px">муж.</span></div>
<div class="c" style="top:527px;left:355px;width:192px;background:#ffffff;letter-spacing:0.157px;"><span style="margin-right:-0.157px">Основной персонал</span></div>
<div class="c" style="top:527px;left:547px;width:161px;background:#ffffff;letter-spacing:-0.100px;"><span style="margin-right:0.100px">25.07.2016</span></div>
<div class="c" style="top:527px;left:708px;width:188px;background:#ffffff;letter-spacing:-0.100px;border-right:none;padding-left:22px;"><span style="margin-right:0.100px">12102</span></div>
<div class="rh" style="top:547px">20</div>
<div class="c" style="top:547px;left:33px;width:161px;background:#92d050;letter-spacing:0.160px;text-align:left;padding-left:1.8px;"><span style="margin-right:-0.160px">Попова М. Д.</span></div>
<div class="c" style="top:547px;left:194px;width:161px;background:#ffffff;letter-spacing:0.853px;"><span style="margin-right:-0.853px">жен.</span></div>
<div class="c" style="top:547px;left:355px;width:192px;background:#ffffff;letter-spacing:0.194px;"><span style="margin-right:-0.194px">Вспомогательный песрсонал</span></div>
<div class="c" style="top:547px;left:547px;width:161px;background:#ffffff;letter-spacing:-0.100px;"><span style="margin-right:0.100px">25.07.2016</span></div>
<div class="c" style="top:547px;left:708px;width:188px;background:#ffffff;letter-spacing:-0.100px;border-right:none;padding-left:22px;"><span style="margin-right:0.100px">9800</span></div>
<div class="rh" style="top:567px">21</div>
<div class="c" style="top:567px;left:33px;width:161px;background:#92d050;letter-spacing:0.155px;text-align:left;padding-left:1.8px;"><span style="margin-right:-0.155px">Николаев А. Д.</span></div>
<div class="c" style="top:567px;left:194px;width:161px;background:#ffffff;letter-spacing:0.800px;"><span style="margin-right:-0.800px">муж.</span></div>
<div class="c" style="top:567px;left:355px;width:192px;background:#ffffff;letter-spacing:0.157px;"><span style="margin-right:-0.157px">Основной персонал</span></div>
<div class="c" style="top:567px;left:547px;width:161px;background:#ffffff;letter-spacing:-0.100px;"><span style="margin-right:0.100px">24.08.2016</span></div>
<div class="c" style="top:567px;left:708px;width:188px;background:#ffffff;letter-spacing:-0.100px;border-right:none;padding-left:22px;"><span style="margin-right:0.100px">23851</span></div>
<svg style="position:absolute;left:17px;top:172px;" width="12" height="12" viewBox="0 0 12 12"><path d="M11 0.500V11H0.500z" fill="#c3c7cc"/></svg>
<div style="position:absolute;left:33px;top:187px;width:863px;height:1px;background:repeating-linear-gradient(90deg,transparent 0 2px,#0000ff 2px 6px,transparent 6px 8px)"></div>
<div style="position:absolute;left:33px;top:187px;width:1px;height:20px;background:repeating-linear-gradient(180deg,transparent 0 3px,#0000ff 3px 7px,transparent 7px 8px)"></div>
<div style="position:absolute;left:33px;top:203px;width:1px;height:378px;background:repeating-linear-gradient(180deg,transparent 0 3px,#6d2fd0 3px 7px,transparent 7px 8px)"></div>
<div style="position:absolute;left:545px;top:425px;width:164px;height:23px;border:1px solid #000;box-shadow:inset 0 0 0 1px #fff,inset 0 0 0 2px #000"></div>
<div style="position:absolute;left:704px;top:443px;width:6px;height:6px;background:#000;border:1px solid #fff"></div>
<div id="vscroll"></div>
<div style="position:absolute;left:897px;top:168px;width:15px;height:7px;background:#fff;border:1px solid #85898f"></div>
<div style="position:absolute;left:901px;top:171px;width:8px;height:1px;background:#85898f"></div>
<svg style="position:absolute;left:898px;top:179px;" width="11" height="7" viewBox="0 0 11 7"><path d="M0.500 6.500h10L5.500 0.500z" fill="#4f4f4f"/></svg>
<div style="position:absolute;left:897px;top:200px;width:14px;height:157px;border:1px solid #9a9ea3;border-radius:2px;background:linear-gradient(90deg,#f4f5f7,#e3e6ea 60%,#d2d6db)"></div>
<div style="position:absolute;left:900px;top:275px;width:8px;height:1px;background:#7f8388"></div>
<div style="position:absolute;left:900px;top:277px;width:8px;height:1px;background:#7f8388"></div>
<div style="position:absolute;left:900px;top:279px;width:8px;height:1px;background:#7f8388"></div>
<div style="position:absolute;left:900px;top:281px;width:8px;height:1px;background:#7f8388"></div>
<svg style="position:absolute;left:898px;top:570px;" width="11" height="7" viewBox="0 0 11 7"><path d="M0.500 0.500h10L5.500 6.500z" fill="#4f4f4f"/></svg>
<div id="sheetbar"></div>
<div id="status"></div>
<svg style="position:absolute;left:12px;top:585px;" width="8" height="8" viewBox="0 0 8 8"><rect x="0" y="0.500" width="1.500" height="7" fill="#4a4e55"/><path d="M7 0.500v7L2.500 4z" fill="#4a4e55"/></svg>
<svg style="position:absolute;left:28px;top:585px;" width="6" height="8" viewBox="0 0 6 8"><path d="M5 0.500v7L0.500 4z" fill="#4a4e55"/></svg>
<svg style="position:absolute;left:43px;top:585px;" width="6" height="8" viewBox="0 0 6 8"><path d="M0.500 0.500v7L5 4z" fill="#4a4e55"/></svg>
<svg style="position:absolute;left:57px;top:585px;" width="8" height="8" viewBox="0 0 8 8"><rect x="6" y="0.500" width="1.500" height="7" fill="#4a4e55"/><path d="M0.500 0.500v7L5 4z" fill="#4a4e55"/></svg>
<svg style="position:absolute;left:66px;top:580px;" width="212" height="18" viewBox="0 0 212 18"><path d="M0 0.500H212" stroke="#a4a8ae"/>
<path d="M3.500 0 V15 Q3.500 17.500 6 17.500 H52.500 L65 0.500z" fill="#fff" stroke="#8f949b"/><path d="M4.500 0.500H64" stroke="#fff" stroke-width="1.400"/>
<path d="M56 17.500L59 13.500M107.500 17.500L120 0.500M111 17.500L114 13.500M160.500 17.500L173 0.500M164 17.500L167 13.500M192.500 17.500L205 0.500" stroke="#8f949b" fill="none"/></svg>
<div style="position:absolute;left:79.90px;top:581px;font-size:12.3px;line-height:16px;letter-spacing:0.026px;color:#3a3a3a;white-space:nowrap;font-weight:bold;">Лист1</div>
<div style="position:absolute;left:133.00px;top:581px;font-size:12.3px;line-height:16px;letter-spacing:0.258px;color:#555;white-space:nowrap;">Лист2</div>
<div style="position:absolute;left:185.40px;top:581px;font-size:12.3px;line-height:16px;letter-spacing:0.308px;color:#555;white-space:nowrap;">Лист3</div>
<svg style="position:absolute;left:239px;top:583px;" width="16" height="13" viewBox="0 0 16 13"><rect x="3.500" y="3.500" width="10" height="7" fill="#f6f8fb" stroke="#6e7f9a"/><path d="M3.500 10.500l2 2h8l2-2" fill="none" stroke="#6e7f9a" stroke-width=".8"/>
<path d="M3.500 0v7M0 3.500h7M1 1l5 5M6 1l-5 5" stroke="#e9a83a" stroke-width="1"/><circle cx="3.500" cy="3.500" r="1.500" fill="#ffd76a"/></svg>
<div style="position:absolute;left:541px;top:583px;width:6px;height:13px;background:#fff;border:1px solid #7f8388"></div>
<div style="position:absolute;left:543px;top:586px;width:1px;height:7px;background:#7f8388"></div>
<svg style="position:absolute;left:552px;top:584px;" width="7" height="11" viewBox="0 0 7 11"><path d="M6.500 0.500v10L0.500 5.500z" fill="#4f4f4f"/></svg>
<div style="position:absolute;left:565px;top:582px;width:238px;height:14px;border:1px solid #9a9ea3;border-radius:2px;background:linear-gradient(#f6f7f9,#e3e6ea 55%,#d4d8dd)"></div>
<div style="position:absolute;left:680px;top:586px;width:1px;height:7px;background:#7f8388"></div>
<div style="position:absolute;left:682px;top:586px;width:1px;height:7px;background:#7f8388"></div>
<div style="position:absolute;left:684px;top:586px;width:1px;height:7px;background:#7f8388"></div>
<div style="position:absolute;left:686px;top:586px;width:1px;height:7px;background:#7f8388"></div>
<svg style="position:absolute;left:876px;top:584px;" width="7" height="11" viewBox="0 0 7 11"><path d="M0.500 0.500v10L6.500 5.500z" fill="#4f4f4f"/></svg>
<div style="position:absolute;left:889px;top:583px;width:6px;height:13px;background:#fff;border:1px solid #7f8388"></div>
<div style="position:absolute;left:891px;top:586px;width:1px;height:7px;background:#7f8388"></div>
<div style="position:absolute;left:14.60px;top:601px;font-size:11.6px;line-height:14px;letter-spacing:0.166px;color:#444;white-space:nowrap;">Укажите</div>
<div style="position:absolute;left:69px;top:600px;width:1px;height:18px;background:#a9acb1"></div>
<div style="position:absolute;left:70px;top:600px;width:1px;height:18px;background:#eceef0"></div>
<div style="position:absolute;left:104px;top:600px;width:1px;height:18px;background:#a9acb1"></div>
<div style="position:absolute;left:105px;top:600px;width:1px;height:18px;background:#eceef0"></div>
<svg style="position:absolute;left:78px;top:601px;" width="17" height="13" viewBox="0 0 17 13"><rect x="2.500" y="1.500" width="13" height="10.500" fill="#fff" stroke="#5f86c9"/><rect x="3" y="2" width="12" height="2.500" fill="#6b97d8"/><path d="M2.500 7h13M2.500 9.500h13M7 4.500v7.500M11 4.500v7.500" stroke="#9db6df"/><circle cx="3" cy="2.500" r="2.500" fill="#d9503a"/></svg>
<div style="position:absolute;left:655px;top:600px;width:1px;height:18px;background:#a9acb1"></div>
<div style="position:absolute;left:656px;top:600px;width:1px;height:18px;background:#eceef0"></div>
<svg style="position:absolute;left:663px;top:603px;" width="14" height="12" viewBox="0 0 14 12"><rect x="0.500" y="0.500" width="13" height="10" fill="#f1f2f4" stroke="#666a70"/><path d="M0.500 4h13M0.500 7.500h13M5 0.500v10M9.500 0.500v10" stroke="#666a70" stroke-width=".9"/></svg>
<svg style="position:absolute;left:681px;top:603px;" width="14" height="12" viewBox="0 0 14 12"><rect x="0.500" y="0.500" width="13" height="10" fill="#e9eaec" stroke="#666a70"/><rect x="3.500" y="2.500" width="7" height="6" fill="#fff" stroke="#666a70"/><path d="M5 4.500h4M5 6.500h4" stroke="#8a8e94"/></svg>
<svg style="position:absolute;left:700px;top:603px;" width="14" height="12" viewBox="0 0 14 12"><rect x="0.500" y="0.500" width="13" height="10" fill="#e9eaec" stroke="#666a70"/><path d="M3 0.500v7M8 0.500v7M0.500 7.500h13" stroke="#666a70" stroke-width="1.200"/><rect x="3.500" y="1" width="4" height="6" fill="#fff"/></svg>
<div style="position:absolute;left:725.40px;top:601px;font-size:11.2px;line-height:14px;letter-spacing:-0.215px;color:#8a8e94;white-space:nowrap;">100%</div>
<div style="position:absolute;left:761px;top:601px;width:15px;height:15px;border-radius:8px;border:1px solid #b9bcc0;background:radial-gradient(circle at 50% 40%,#f4f5f6,#dfe1e4)"></div>
<div style="position:absolute;left:765px;top:608px;width:7px;height:1.5px;background:#b5b8bd"></div>
<div style="position:absolute;left:776px;top:607px;width:102px;height:1px;background:#a4a7ac"></div>
<div style="position:absolute;left:776px;top:608px;width:102px;height:1px;background:#eceef0"></div>
<div style="position:absolute;left:826px;top:604px;width:1px;height:8px;background:#a4a7ac"></div>
<div style="position:absolute;left:877px;top:601px;width:15px;height:15px;border-radius:8px;border:1px solid #b9bcc0;background:radial-gradient(circle at 50% 40%,#f4f5f6,#dfe1e4)"></div>
<div style="position:absolute;left:881px;top:608px;width:7px;height:1.5px;background:#b5b8bd"></div>
<div style="position:absolute;left:883.8px;top:605px;width:1.5px;height:7px;background:#b5b8bd"></div>
<svg style="position:absolute;left:901px;top:610px;" width="10" height="9" viewBox="0 0 10 9"><rect x="8" y="0" width="2" height="2" fill="#9a9da2"/><rect x="9" y="1" width="1" height="1" fill="#f2f3f4"/><rect x="5" y="3" width="2" height="2" fill="#9a9da2"/><rect x="6" y="4" width="1" height="1" fill="#f2f3f4"/><rect x="8" y="3" width="2" height="2" fill="#9a9da2"/><rect x="9" y="4" width="1" height="1" fill="#f2f3f4"/><rect x="2" y="6" width="2" height="2" fill="#9a9da2"/><rect x="3" y="7" width="1" height="1" fill="#f2f3f4"/><rect x="5" y="6" width="2" height="2" fill="#9a9da2"/><rect x="6" y="7" width="1" height="1" fill="#f2f3f4"/><rect x="8" y="6" width="2" height="2" fill="#9a9da2"/><rect x="9" y="7" width="1" height="1" fill="#f2f3f4"/></svg>
<div style="position:absolute;left:349px;top:330px;width:245px;height:155px;border-radius:7px;border:1px solid #2c2c2c;
background:linear-gradient(100deg,#cfe0f2 0%,#bdd3ea 18%,#d7e6f5 30%,#c3d7ec 48%,#dbe8f6 62%,#bcd2e9 80%,#cfe0f1 100%);
box-shadow:0 0 0 1px rgba(255,255,255,.55) inset,0 2px 10px 2px rgba(0,0,0,.42),0 0 2px 1px rgba(0,0,0,.45)"></div>
<div style="position:absolute;left:355px;top:358px;width:233px;height:121px;background:#f0f0f0;border:1px solid #6f7a86;box-shadow:0 0 0 1px rgba(255,255,255,.6)"></div>
<div style="position:absolute;left:355.90px;top:337px;font-size:12px;line-height:16px;letter-spacing:0.048px;color:#000;white-space:nowrap;text-shadow:0 0 4px #fff,0 0 6px #fff,0 0 8px #fff;">Форматирование таблицы</div>
<div style="position:absolute;left:512px;top:330px;width:29px;height:18px;border:1px solid #56606d;border-top:none;border-radius:0 0 0 5px;
background:linear-gradient(#e3ecf5 0%,#c9d8e7 45%,#a9bfd3 50%,#b9cde0 100%);box-shadow:0 0 0 1px rgba(255,255,255,.6) inset"></div>
<div style="position:absolute;left:540px;top:330px;width:48px;height:18px;border:1px solid #5a2a22;border-top:none;border-radius:0 0 5px 0;
background:linear-gradient(#e8b3a0 0%,#d88a72 45%,#c4412a 50%,#cf6a4e 100%);box-shadow:0 0 0 1px rgba(255,255,255,.45) inset"></div>
<svg style="position:absolute;left:519px;top:331px" width="16" height="16" viewBox="0 0 16 16"><text x="8" y="13.500" font-family="Liberation Sans" font-weight="bold" font-size="13" fill="#fff" stroke="#4b5663" stroke-width="1.600" paint-order="stroke" text-anchor="middle">?</text></svg>
<svg style="position:absolute;left:557px;top:332px" width="16" height="13" viewBox="0 0 16 13"><path d="M2 2h3.200L8 4.700 10.800 2H14l-4.200 4.500L14 11h-3.200L8 8.300 5.200 11H2l4.200-4.500z" fill="#fff" stroke="#4b3b3b" stroke-width="1.300" stroke-linejoin="round"/></svg>
<div style="position:absolute;left:361.40px;top:366px;font-size:11.6px;line-height:14px;letter-spacing:-0.209px;color:#000;white-space:nowrap;">Укажите расположение данных таблицы:</div>
<div style="position:absolute;left:362px;top:379px;width:7px;height:1px;background:#000"></div>
<div style="position:absolute;left:386px;top:382px;width:170px;height:20px;background:#fff;border:1px solid #abadb3;border-top-color:#8e9198"></div>
<div style="position:absolute;left:390px;top:386px;width:68px;height:13px;background:#000"></div>
<div style="position:absolute;left:390.40px;top:385px;font-size:11.6px;line-height:14px;letter-spacing:-0.343px;color:#fff;white-space:nowrap;">=$A$2:$E$26</div>
<div style="position:absolute;left:556px;top:383px;width:22px;height:19px;border:1px solid #8e9198;border-radius:3px;background:linear-gradient(#fafafa,#e4e4e4);box-shadow:0 0 0 1px #fff inset"></div>
<svg style="position:absolute;left:559px;top:386px;" width="16" height="13" viewBox="0 0 16 13"><rect x="0.500" y="0.500" width="15" height="12" fill="#fff" stroke="#7f9ac8" stroke-width=".8"/><path d="M0.500 3.500h15M0.500 6.500h15M0.500 9.500h15M4.500 0.500v12M10.500 0.500v12" stroke="#9db6df" stroke-width=".8"/>
<rect x="1" y="1" width="14" height="2" fill="#7fa0d8"/><path d="M6 3.500l6 2.500-2.200.800 2.700 2.700-1.500 1.500-2.700-2.700-.800 2.200z" fill="#d8412e" stroke="#a92a1c" stroke-width=".5"/></svg>
<div style="position:absolute;left:386px;top:413px;width:13px;height:13px;border:1px solid #8e8f8f;background:linear-gradient(135deg,#d2d5d9,#f6f6f6 70%)"></div>
<div style="position:absolute;left:388px;top:415px;width:9px;height:9px;border:1px solid #c5c9cd;background:linear-gradient(135deg,#d9dcdf,#fbfbfb)"></div>
<svg style="position:absolute;left:388px;top:414px;" width="10" height="11" viewBox="0 0 10 11"><path d="M1.500 5l2.500 3.500L8.500 1.500" fill="none" stroke="#2a3f8f" stroke-width="1.800"/></svg>
<div style="position:absolute;left:402.00px;top:413px;font-size:11.6px;line-height:14px;letter-spacing:-0.381px;color:#000;white-space:nowrap;">Таблица с заголовками</div>
<div style="position:absolute;left:402px;top:426px;width:7px;height:1px;background:#000"></div>
<div style="position:absolute;left:422px;top:448px;width:74px;height:22px;border:1px solid #3c7fb1;border-radius:3px;
background:linear-gradient(#f2f2f2 0%,#ebebeb 48%,#dddddd 52%,#cfcfcf 100%);box-shadow:0 0 0 1px #49c3f0 inset,0 0 0 2px rgba(255,255,255,.7) inset"></div>
<div style="position:absolute;left:450.00px;top:452px;font-size:11.6px;line-height:14px;letter-spacing:-1.160px;color:#000;white-space:nowrap;">OK</div>
<div style="position:absolute;left:507px;top:448px;width:74px;height:22px;border:1px solid #707070;border-radius:3px;
background:linear-gradient(#f2f2f2 0%,#ebebeb 48%,#dddddd 52%,#cfcfcf 100%);box-shadow:0 0 0 1px #fcfcfc inset"></div>
<div style="position:absolute;left:522.90px;top:452px;font-size:11.6px;line-height:14px;letter-spacing:-0.504px;color:#000;white-space:nowrap;">Отмена</div>
<div style="position:absolute;left:415px;top:440px;width:91px;height:37px;border:4.5px solid #ec1c24;border-radius:10px"></div>
</div>
</body></html>
